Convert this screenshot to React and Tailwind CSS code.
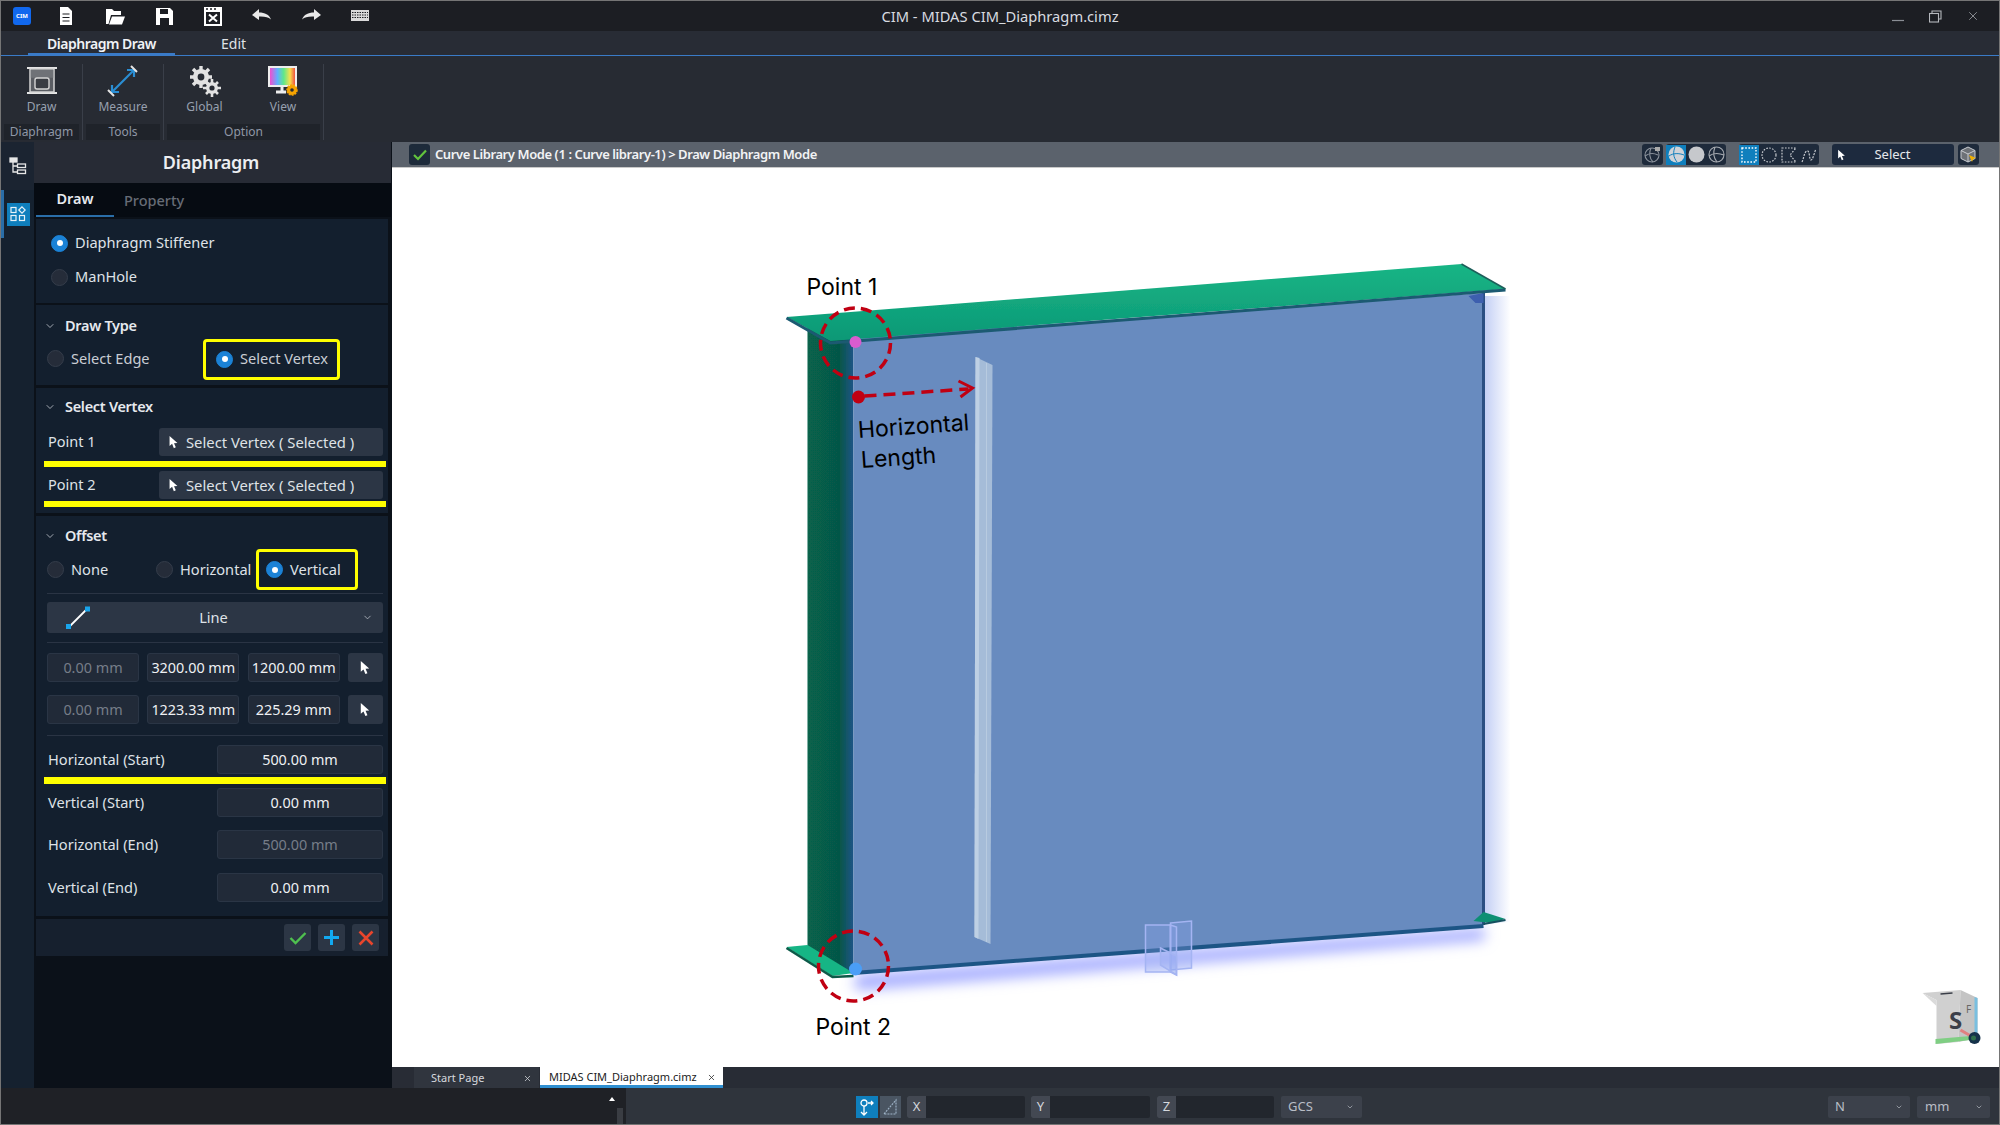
import React from "react";
import { ChevronDown, X } from "lucide-react";

const Radio = ({ on }) => (
  <span className={`flex h-[17px] w-[17px] shrink-0 items-center justify-center rounded-full border ${on ? "border-[#1b82d6] bg-[#1b82d6]" : "border-[#343c4a] bg-[#252c39]"}`}>
    {on && <span className="h-[6px] w-[6px] rounded-full bg-white" />}
  </span>
);

const Cursor = ({ size = 14 }) => (
  <svg width={size} height={size + 3} viewBox="0 0 12 16" className="shrink-0">
    <path d="M1.5 1 L1.5 12.5 L4.4 10 L6.4 15 L8.6 14 L6.6 9.3 L10.5 9 Z" fill="#fff" />
  </svg>
);

const Heading = ({ children }) => (
  <div className="flex h-[26px] items-center">
    <ChevronDown size={12} className="ml-[8px] mr-[9px] text-[#c5cad2]" strokeWidth={1.6} />
    <span className="text-[14.5px] font-semibold tracking-[-0.3px] text-[#e6e9ee]">{children}</span>
  </div>
);

const Field = ({ w, children, dim }) => (
  <div className={`flex h-[29px] items-center justify-center rounded-[3px] border border-[#2a3545] bg-[#212a38] text-[14.4px] ${dim ? "text-[#767d88]" : "text-[#eef0f3]"} ${w}`}>
    {children}
  </div>
);

const CursorBtn = () => (
  <div className="flex h-[29px] w-[35px] items-center justify-center rounded-[3px] bg-[#2c3645]">
    <Cursor size={12} />
  </div>
);

const LabelRow = ({ label, value, dim, cls }) => (
  <div className={`flex items-center justify-between ${cls}`}>
    <span className="pb-[2px] pl-[1px] text-[14.6px] leading-[20px] text-[#dfe2e7]">{label}</span>
    <Field w="w-[166px]" dim={dim}>{value}</Field>
  </div>
);

const SelectBtn = () => (
  <div className="flex h-[28px] w-[224px] items-center rounded-[3px] bg-[#2c3645] pl-[9px] text-[14.8px] text-[#dfe2e7]">
    <Cursor size={11} />
    <span className="ml-[7px]">Select Vertex ( Selected )</span>
  </div>
);

const YellowBox = ({ cls, children }) => (
  <div className={`flex h-[41px] items-center rounded-[4px] border-[3px] border-[#ffff00] ${cls}`}>{children}</div>
);

const Yellow = ({ cls }) => <div className={`-mx-[3px] bg-[#ffff00] ${cls}`} />;
const Divider = ({ cls }) => <div className={`h-px bg-[#2a3444] ${cls}`} />;

const TopIcon = ({ children }) => (
  <svg width="22" height="22" viewBox="0 0 22 22" className="shrink-0">{children}</svg>
);

const RibbonItem = ({ w, label, children }) => (
  <div className={`flex flex-col items-center ${w}`}>
    <div className="flex h-[34px] items-center justify-center">{children}</div>
    <span className="text-[12px] leading-[18px] text-[#97a0af]">{label}</span>
  </div>
);

const Group = ({ w, label, children }) => (
  <div className={`flex h-full flex-col border-r border-[#3a3f49] ${w}`}>
    <div className="flex h-[58px]">{children}</div>
    <div className="mx-[3px] mt-[2px] flex h-[16px] items-center justify-center bg-[#1f232a] text-[12px] text-[#8f97a6]">{label}</div>
  </div>
);

const Cell = ({ active, children }) => (
  <div className={`flex h-[20px] w-[20px] items-center justify-center ${active ? "bg-[#0f7fbd]" : ""}`}>{children}</div>
);

const Scene = () => (
  <svg viewBox="392 168 1606 899" className="h-full w-full" style={{ display: "block" }}>
    <defs>
      <linearGradient id="gface" x1="0" x2="1" y1="0" y2="0">
        <stop offset="0" stopColor="#07634c" />
        <stop offset="0.7" stopColor="#065647" />
        <stop offset="1" stopColor="#1f5488" />
      </linearGradient>
      <linearGradient id="flange" x1="0" x2="0" y1="0" y2="1">
        <stop offset="0" stopColor="#17b585" />
        <stop offset="1" stopColor="#0d9876" />
      </linearGradient>
      <linearGradient id="rglow" x1="0" x2="1" y1="0" y2="0">
        <stop offset="0" stopColor="#c3cff5" />
        <stop offset="1" stopColor="#ffffff" />
      </linearGradient>
      <filter id="blur" x="-20%" y="-100%" width="140%" height="300%">
        <feGaussianBlur stdDeviation="7" />
      </filter>
      <filter id="soft" x="-20%" y="-20%" width="140%" height="140%">
        <feGaussianBlur stdDeviation="0.6" />
      </filter>
    </defs>
    <rect x="392" y="168" width="1606" height="899" fill="#fff" />
    <polygon points="855,975 1484,928 1484,940 855,990" fill="#a0a8ff" filter="url(#blur)" />
    <polygon points="1484,296 1510,296 1510,922 1484,924" fill="url(#rglow)" />
    <g filter="url(#soft)">
      <polygon points="807,325 853,340 853,975 807,948" fill="url(#gface)" />
      <polygon points="853,338 1483,293 1483,925 853,972" fill="#688bbf" />
      <line x1="1483" y1="293" x2="1483" y2="925" stroke="#2a4f83" strokeWidth="3" />
      <line x1="853" y1="973" x2="1483" y2="926" stroke="#1f5585" strokeWidth="4" />
      <polygon points="1468,296 1483,293 1483,303 1475,303" fill="#3c5fae" />
      <polygon points="786,317 1461,264 1505,289 830,341" fill="url(#flange)" />
      <polyline points="786,318 830,343 1505,290" fill="none" stroke="#1c5a72" strokeWidth="3" />
      <line x1="1461" y1="264" x2="1505" y2="289" stroke="#1c5e5a" strokeWidth="1.5" />
      <polygon points="786,947 807,945 853,973 832,976" fill="#16b585" />
      <polyline points="786,948 832,977 853,976" fill="none" stroke="#0c5a48" strokeWidth="2.5" />
      <polygon points="1473,921 1483,912 1505,919 1490,923" fill="#0f8f73" />
      <line x1="1483" y1="924" x2="1505" y2="920" stroke="#17505f" strokeWidth="2" />
      <polygon points="975,357 992,365 990,944 974,937" fill="#a5bcd8" />
      <polygon points="975,357 979,358 978,939 974,937" fill="#bed0e4" />
      <line x1="986" y1="363" x2="986" y2="942" stroke="#b8cbe0" strokeWidth="1" />
    </g>
    <g fill="#8fa7ee" fillOpacity="0.3" stroke="#a4b4f2" strokeWidth="1.5">
      <polygon points="1145,925 1170,925 1170,972 1145,972" />
      <polygon points="1170,923 1191,921 1191,968 1170,970" />
      <polygon points="1170,925 1176,927 1176,975 1170,972" />
      <polygon points="1160,948 1176,956 1176,975 1160,965" />
    </g>
    <g fill="none" stroke="#c00012" strokeWidth="3.5" strokeDasharray="11 6">
      <circle cx="855" cy="343" r="35" />
      <circle cx="853" cy="966" r="35" />
    </g>
    <circle cx="855" cy="342" r="6" fill="#d95ccf" />
    <circle cx="855" cy="969" r="6.5" fill="#4a9ef7" />
    <circle cx="858" cy="397" r="6.5" fill="#c00012" />
    <line x1="864" y1="396" x2="968" y2="389" stroke="#c00012" strokeWidth="3.5" strokeDasharray="12 7" />
    <polyline points="958,381 972,388 960,397" fill="none" stroke="#c00012" strokeWidth="3" />
    <g fontFamily="Inter, sans-serif" fontSize="23" fill="#000">
      <text x="806" y="295">Point 1</text>
      <text x="815" y="1035">Point 2</text>
      <text x="858" y="438" transform="rotate(-4 858 438)">Horizontal</text>
      <text x="861" y="468" transform="rotate(-4 861 468)">Length</text>
    </g>
    <g>
      <polygon points="1922,993 1960,990 1958,1042 1936,1044 1936,1000" fill="#d0d0d0" />
      <polygon points="1922,993 1936,1000 1936,1006" fill="#dadada" />
      <polygon points="1960,990 1977,998 1977,1038 1958,1042" fill="#c4c4c4" />
      <polygon points="1974,997 1977,998 1977,1038 1974,1036" fill="#79bfe0" />
      <polygon points="1935,1039 1970,1036 1970,1040 1935,1044" fill="#7fce83" />
      <line x1="1960" y1="1030" x2="1972" y2="1037" stroke="#e08080" strokeWidth="3" />
      <line x1="1940" y1="994" x2="1952" y2="993" stroke="#3b3f49" strokeWidth="1.5" />
      <text x="1955" y="1029" textAnchor="middle" fontFamily="'Noto Sans', sans-serif" fontWeight="700" fontSize="24" fill="#3b3f49">S</text>
      <text x="1968" y="1013" textAnchor="middle" fontFamily="'Noto Sans', sans-serif" fontSize="10" fill="#666">F</text>
      <circle cx="1974" cy="1038" r="6" fill="#16324a" />
      <circle cx="1973" cy="1038" r="2.5" fill="#2f6e4a" />
    </g>
  </svg>
);

export default function App() {
  return (
    <div className="flex h-[1125px] w-[2000px] flex-col overflow-hidden border border-[#757575] bg-[#0b1119] font-['Noto_Sans',sans-serif]">
      {/* title bar */}
      <div className="relative flex h-[30px] shrink-0 items-center bg-[#1c1e23]">
        <div className="ml-[12px] flex h-[18px] w-[18px] items-center justify-center rounded-[3px] bg-[#1168ee] text-[6px] font-bold text-white">CIM</div>
        <div className="ml-[24px] flex items-center gap-[27px]">
          <TopIcon><path d="M5 2h8l4 4v14H5z" fill="#fff" /><path d="M7.5 9h7M7.5 12.5h7M7.5 16h7" stroke="#1c1e23" strokeWidth="1.2" /></TopIcon>
          <TopIcon><path d="M2 19V4h6l2 2h7v4H7L4.5 19z" fill="#fff" /><path d="M8 11.5h13L18 19.5H5z" fill="#fff" /></TopIcon>
          <TopIcon><path d="M3 3h14l3 3v14H3z" fill="#fff" /><rect x="7" y="4" width="8" height="5" fill="#1c1e23" /><rect x="7" y="13" width="9" height="7" fill="#1c1e23" /></TopIcon>
          <TopIcon><path d="M2 2h18v19H2z" fill="#fff" /><rect x="4" y="7" width="14" height="12" fill="#1c1e23" /><path d="M4 4h2M8 4h2M12 4h2" stroke="#1c1e23" strokeWidth="1.5" /><path d="M7 9.5l8 7M15 9.5l-8 7" stroke="#fff" strokeWidth="2" /></TopIcon>
          <TopIcon><path d="M1 10l7-6v3.5c6 0 10 2 12 7-3-2.5-6-3.2-12-3V15z" fill="#e9e9e9" /></TopIcon>
          <TopIcon><path d="M21 10l-7-6v3.5c-6 0-10 2-12 7 3-2.5 6-3.2 12-3V15z" fill="#e9e9e9" /></TopIcon>
          <TopIcon><rect x="2" y="5" width="18" height="11" fill="#d9d9d9" /><path d="M3 7.5h16M3 10h16M3 12.5h16" stroke="#1c1e23" strokeWidth="1" strokeDasharray="1.5 1" /></TopIcon>
        </div>
        <span className="absolute left-0 right-0 text-center text-[14.7px] text-[#d8dbe0]">CIM - MIDAS CIM_Diaphragm.cimz</span>
        <div className="ml-auto flex items-center gap-[24px] pr-[19px]">
          <svg width="13" height="13" viewBox="0 0 13 13"><path d="M0 10.5h12" stroke="#8a8e95" strokeWidth="1.2" /></svg>
          <svg width="13" height="13" viewBox="0 0 13 13" fill="none" stroke="#b5b8bd" strokeWidth="1.1"><rect x="0.5" y="3.5" width="9" height="8.5" /><path d="M3 3V1h9v8h-2.5" /></svg>
          <X size={14} strokeWidth={1.1} className="text-[#c3c6cb]" />
        </div>
      </div>
      {/* menu tabs */}
      <div className="flex h-[25px] shrink-0 border-b border-[#3a7bc8] bg-[#282c35]">
        <div className="ml-[27px] flex w-[147px] items-center justify-center border-b-[2px] border-[#3a7bc8] pt-[2px] text-[14px] font-semibold tracking-[-0.5px] text-[#f0f2f5]">Diaphragm Draw</div>
        <div className="ml-[46px] flex items-center pt-[1px] text-[14px] text-[#dfe2e7]">Edit</div>
      </div>
      {/* ribbon */}
      <div className="flex h-[86px] shrink-0 items-stretch bg-[#272b33] pb-[2px] pt-[8px]">
        <div className="flex h-full">
          <Group w="w-[82px]" label="Diaphragm">
            <RibbonItem w="w-[82px]" label="Draw">
              <svg width="32" height="30" viewBox="0 0 32 30"><path d="M1 2h30M1 27h30" stroke="#e4e4e4" strokeWidth="2" /><rect x="4" y="3" width="24" height="23" fill="#5a5d63" stroke="#d5d5d5" strokeWidth="1.5" /><rect x="4.8" y="3.8" width="22.4" height="8" fill="#6f7277" /><rect x="9" y="12" width="14" height="11" rx="2" fill="#3a3d43" stroke="#d5d5d5" strokeWidth="1.4" /></svg>
            </RibbonItem>
          </Group>
          <Group w="w-[81px]" label="Tools">
            <RibbonItem w="w-[81px]" label="Measure">
              <svg width="32" height="32" viewBox="0 0 32 32" fill="none"><path d="M6 26L26 6" stroke="#2a8ed4" strokeWidth="2.2" /><path d="M20 5h7v7M5 20v7h7" stroke="#2a8ed4" strokeWidth="2.2" /><path d="M24 1l6 6M1 25l6 6" stroke="#e4e4e4" strokeWidth="2" /></svg>
            </RibbonItem>
          </Group>
          <Group w="w-[160px]" label="Option">
            <div className="flex w-full">
              <RibbonItem w="w-[81px]" label="Global">
                <svg width="32" height="32" viewBox="0 0 32 32"><g fill="#e2e2e2"><circle cx="12" cy="12" r="8" /><g stroke="#e2e2e2" strokeWidth="3.4"><path d="M12 1v22M1 12h22M4 4l16 16M20 4L4 20" /></g><circle cx="23" cy="23" r="6" /><g stroke="#e2e2e2" strokeWidth="2.6"><path d="M23 14v18M14 23h18M17 17l12 12M29 17L17 29" /></g></g><circle cx="12" cy="12" r="3.4" fill="#272b33" /><circle cx="23" cy="23" r="2.6" fill="#272b33" /></svg>
              </RibbonItem>
              <RibbonItem w="w-[76px]" label="View">
                <svg width="32" height="32" viewBox="0 0 32 32"><defs><linearGradient id="rb" x1="0" x2="1" y1="0" y2="0"><stop offset="0" stopColor="#ef4fd0" /><stop offset="0.3" stopColor="#60b0ff" /><stop offset="0.55" stopColor="#5fe88a" /><stop offset="0.8" stopColor="#f5e04f" /><stop offset="1" stopColor="#f0503f" /></linearGradient></defs><rect x="1" y="1" width="29" height="21" fill="#eee" /><rect x="3" y="3" width="25" height="17" fill="url(#rb)" /><path d="M15 22v4M9 27h10" stroke="#eee" strokeWidth="3" /><circle cx="25" cy="25" r="5" fill="#f5a300" stroke="#f5a300" strokeWidth="1.5" strokeDasharray="2 1" /><circle cx="25" cy="25" r="1.8" fill="#272b33" /></svg>
              </RibbonItem>
            </div>
          </Group>
        </div>
      </div>
      {/* main */}
      <div className="flex min-h-0 flex-1">
        {/* rail */}
        <div className="flex w-[33px] shrink-0 flex-col bg-[#15212f]">
          <div className="flex h-[48px] items-center justify-center bg-[#1b2431]">
            <svg width="18" height="18" viewBox="0 0 18 18" fill="none" stroke="#e6e6e6" strokeWidth="1.3"><rect x="1" y="1" width="7" height="4" fill="#e6e6e6" /><rect x="8.5" y="7" width="8" height="3.5" /><rect x="8.5" y="13" width="8" height="3.5" /><path d="M4 5v10h4.5M4 9h4.5" /></svg>
          </div>
          <div className="flex h-[48px] items-center justify-center border-l-[3px] border-[#2a6ea8] pr-[2px]">
            <div className="flex h-[23px] w-[23px] items-center justify-center bg-[#0f7fbd]">
              <svg width="16" height="16" viewBox="0 0 16 16" fill="none" stroke="#e8f2f8" strokeWidth="1.2"><rect x="1" y="1.5" width="5" height="5" /><path d="M12 0.8l3.2 3.2L12 7.2 8.8 4z" /><rect x="1" y="9.5" width="5" height="5" /><rect x="9.5" y="9.5" width="5" height="5" /></svg>
            </div>
          </div>
        </div>
        {/* panel */}
        <div className="flex w-[357px] shrink-0 flex-col bg-[#0b1119]">
          <div className="flex h-[41px] items-center justify-center bg-[#272b35] pr-[3px] text-[18px] font-semibold tracking-[-0.2px] text-[#eceef1]">Diaphragm</div>
          <div className="flex h-[34px] bg-[#060b12] pl-[2px]">
            <div className="flex w-[78px] items-center justify-center border-b-[2px] border-[#2a6ea8] text-[14.5px] font-semibold text-[#e6e9ee]">Draw</div>
            <div className="ml-[10px] flex items-center pt-[1px] text-[14.5px] font-medium text-[#666c76]">Property</div>
          </div>
          <div className="flex flex-col pl-[2px] pr-[3px] text-[14.6px] text-[#dfe2e7]">
            {/* section 1 */}
            <div className="mt-[2px] h-[84px] bg-[#131f2e] pl-[15px] pt-[7px]">
              <div className="flex h-[34px] items-center gap-[7px]"><Radio on /><span>Diaphragm Stiffener</span></div>
              <div className="flex h-[34px] items-center gap-[7px]"><Radio /><span>ManHole</span></div>
            </div>
            {/* section 2 */}
            <div className="mt-[2px] h-[80px] bg-[#131f2e] pt-[8px]">
              <Heading>Draw Type</Heading>
              <div className="flex items-center pl-[11px]">
                <div className="flex w-[156px] items-center gap-[7px] pb-[1px]"><Radio /><span className="text-[#c9cdd4]">Select Edge</span></div>
                <YellowBox cls="w-[137px] gap-[7px] pb-[1px] pl-[10px]"><Radio on /><span className="text-[#c9cdd4]">Select Vertex</span></YellowBox>
              </div>
            </div>
            {/* section 3 */}
            <div className="mt-[3px] flex h-[125px] flex-col bg-[#131f2e] pl-[11px] pr-[5px] pt-[6px]">
              <div className="-ml-[11px]"><Heading>Select Vertex</Heading></div>
              <div className="mt-[8px] flex items-center justify-between"><span className="pl-[1px] text-[14.5px]">Point 1</span><SelectBtn /></div>
              <Yellow cls="mt-[5px] h-[6px]" />
              <div className="mt-[4px] flex items-center justify-between"><span className="pl-[1px] text-[14.5px]">Point 2</span><SelectBtn /></div>
              <Yellow cls="mt-[2px] h-[6px]" />
            </div>
            {/* section 4 */}
            <div className="mt-[3px] flex h-[400px] flex-col bg-[#131f2e] pl-[11px] pr-[5px] pt-[7px]">
              <div className="-ml-[11px]"><Heading>Offset</Heading></div>
              <div className="flex items-center">
                <div className="flex w-[109px] items-center gap-[7px]"><Radio /><span>None</span></div>
                <div className="flex w-[100px] items-center gap-[7px]"><Radio /><span>Horizontal</span></div>
                <YellowBox cls="w-[102px] gap-[7px] pl-[7px]"><Radio on /><span>Vertical</span></YellowBox>
              </div>
              <Divider cls="mt-[3px]" />
              <div className="relative mt-[8px] flex h-[31px] items-center justify-center rounded-[3px] bg-[#2c3645] pr-[3px] text-[14.6px] text-[#dfe2e7]">
                <svg width="28" height="26" viewBox="0 0 28 26" className="absolute left-[17px] top-[3px]"><path d="M5 22L23 4" stroke="#fff" strokeWidth="1.8" /><rect x="2" y="19" width="5" height="5" fill="#19a5ec" /><rect x="21" y="1.5" width="5" height="5" fill="#19a5ec" /></svg>
                Line
                <ChevronDown size={11} strokeWidth={1.6} className="absolute right-[10px] text-[#c5cad2]" />
              </div>
              <Divider cls="mt-[9px]" />
              <div className="mt-[10px] flex justify-between">
                <Field w="w-[92px]" dim>0.00 mm</Field><Field w="w-[92px]">3200.00 mm</Field><Field w="w-[92px]">1200.00 mm</Field><CursorBtn />
              </div>
              <div className="mt-[13px] flex justify-between">
                <Field w="w-[92px]" dim>0.00 mm</Field><Field w="w-[92px]">1223.33 mm</Field><Field w="w-[92px]">225.29 mm</Field><CursorBtn />
              </div>
              <Divider cls="mt-[11px]" />
              <LabelRow label="Horizontal (Start)" value="500.00 mm" cls="mt-[9px]" />
              <Yellow cls="mt-[3px] h-[7px]" />
              <LabelRow label="Vertical (Start)" value="0.00 mm" cls="mt-[4px]" />
              <LabelRow label="Horizontal (End)" value="500.00 mm" dim cls="mt-[13px]" />
              <LabelRow label="Vertical (End)" value="0.00 mm" cls="mt-[14px]" />
            </div>
            {/* footer */}
            <div className="mt-[3px] flex h-[37px] items-center justify-end gap-[7px] bg-[#16202e] pr-[9px]">
              <div className="flex h-[27px] w-[27px] items-center justify-center rounded-[3px] bg-[#2c3645]">
                <svg width="18" height="14" viewBox="0 0 18 14" fill="none"><path d="M1.5 7l5 5L16.5 2" stroke="#4fc04f" strokeWidth="2.4" /></svg>
              </div>
              <div className="flex h-[27px] w-[27px] items-center justify-center rounded-[3px] bg-[#2c3645]">
                <svg width="17" height="17" viewBox="0 0 17 17"><path d="M8.5 1v15M1 8.5h15" stroke="#12a9f0" strokeWidth="3" /></svg>
              </div>
              <div className="flex h-[27px] w-[27px] items-center justify-center rounded-[3px] bg-[#2c3645]">
                <svg width="16" height="16" viewBox="0 0 16 16"><path d="M1.5 1.5l13 13M14.5 1.5l-13 13" stroke="#e8452c" strokeWidth="2.6" /></svg>
              </div>
            </div>
          </div>
        </div>
        {/* viewport column */}
        <div className="ml-[1px] flex min-w-0 flex-1 flex-col">
          <div className="flex h-[26px] shrink-0 items-center border-b border-[#c9c9c9] bg-[#5b626c] pr-[20px]">
            <div className="ml-[17px] flex h-[21px] w-[21px] items-center justify-center rounded-[3px] bg-[#1d2a3a]">
              <svg width="14" height="12" viewBox="0 0 14 12" fill="none"><path d="M1 6l4 4L13 1.5" stroke="#62c43d" strokeWidth="2.2" /></svg>
            </div>
            <span className="ml-[5px] text-[13px] font-semibold tracking-[-0.42px] text-[#f2f3f5]">Curve Library Mode (1 : Curve library-1) &gt; Draw Diaphragm Mode</span>
            <div className="ml-auto flex items-center">
              <div className="flex h-[21px] w-[21px] items-center justify-center rounded-[3px] bg-[#1e2a3b]">
                <svg width="17" height="17" viewBox="0 0 17 17" fill="none" stroke="#8b929c" strokeWidth="1.1"><circle cx="8" cy="9" r="7" /><path d="M1 10c4-3 9-3 13-1M7 2c-2 4-2 10 2 14" /><rect x="11" y="1" width="5" height="4" fill="#aaa" stroke="none" /></svg>
              </div>
              <div className="ml-[3px] flex h-[21px] items-center rounded-[3px] bg-[#1e2a3b]">
                <Cell active><svg width="17" height="17" viewBox="0 0 17 17" fill="none"><circle cx="8.5" cy="8.5" r="8" fill="#cfd3d8" /><path d="M1 10c4-3 10-3 15-1M7 1c-2 5-2 10 2 15" stroke="#0f7fbd" strokeWidth="1" /></svg></Cell>
                <Cell><svg width="17" height="17" viewBox="0 0 17 17"><circle cx="8.5" cy="8.5" r="8" fill="#c6c8cc" /></svg></Cell>
                <Cell><svg width="17" height="17" viewBox="0 0 17 17" fill="none" stroke="#a8acb2" strokeWidth="1.1"><circle cx="8.5" cy="8.5" r="7.5" /><path d="M1 10c4-3 10-3 15-1M7 1c-2 5-2 10 2 15" /></svg></Cell>
              </div>
              <div className="ml-[13px] flex h-[21px] items-center rounded-[3px] bg-[#1e2a3b]">
                <Cell active><svg width="16" height="16" viewBox="0 0 16 16" fill="none" stroke="#fff" strokeWidth="1.4" strokeDasharray="1.6 1.6"><rect x="1" y="1" width="14" height="14" /></svg></Cell>
                <Cell><svg width="16" height="16" viewBox="0 0 16 16" fill="none" stroke="#c9ccd1" strokeWidth="1.2" strokeDasharray="1.6 1.4"><circle cx="8" cy="8" r="7" /></svg></Cell>
                <Cell><svg width="16" height="16" viewBox="0 0 16 16" fill="none" stroke="#c9ccd1" strokeWidth="1.2" strokeDasharray="1.6 1.4"><path d="M1 1h14l-6 7 6 7H1z" /></svg></Cell>
                <Cell><svg width="16" height="16" viewBox="0 0 16 16" fill="none" stroke="#c9ccd1" strokeWidth="1.2" strokeDasharray="2 1.2"><path d="M1 15c2-4 2-10 5-11s2 9 4 9 3-7 5-11" /></svg></Cell>
              </div>
              <div className="ml-[13px] flex h-[21px] w-[122px] items-center rounded-[3px] bg-[#1d2a3e] pl-[5px] text-[13px] text-[#e6e8ec]">
                <Cursor size={9} />
                <span className="flex-1 pr-[15px] text-center">Select</span>
              </div>
              <div className="ml-[4px] flex h-[21px] w-[21px] items-center justify-center rounded-[3px] bg-[#1e2a3b]">
                <svg width="17" height="18" viewBox="0 0 17 18"><path d="M8 1l7 3.5v8L8 16 1 12.5v-8z" fill="#6d7177" stroke="#c9ccd1" /><path d="M1 4.5L8 8l7-3.5M8 8v8" stroke="#c9ccd1" fill="none" /><path d="M9 9l7 3-3 1-1 3z" fill="#f0b000" /></svg>
              </div>
            </div>
          </div>
          <div className="min-h-0 flex-1 bg-white"><Scene /></div>
          <div className="flex h-[21px] shrink-0 bg-[#282c35] text-[11px]">
            <div className="ml-[22px] flex w-[125px] items-center justify-between bg-[#30353e] pl-[17px] pr-[7px] pt-[1px] text-[#d6d9de]">
              <span>Start Page</span><X size={9} />
            </div>
            <div className="ml-[1px] flex w-[183px] items-center justify-between border-b-[3px] border-[#2f8fd0] bg-white pl-[9px] pr-[7px] pt-[3px] text-[#222]">
              <span>MIDAS CIM_Diaphragm.cimz</span><X size={9} />
            </div>
          </div>
        </div>
      </div>
      {/* status bar */}
      <div className="flex h-[36px] shrink-0 bg-[#2f343c]">
        <div className="relative h-full w-[625px] shrink-0 bg-[#1f2126]">
          <span className="absolute left-[608px] top-[9px] h-0 w-0 border-x-[3px] border-b-[4px] border-x-transparent border-b-white" />
          <span className="absolute left-[616px] top-[20px] h-[16px] w-[6px] bg-[#3a3d43]" />
        </div>
        <div className="flex flex-1 items-center pt-[2px]">
          <div className="ml-[230px] flex h-[22px] w-[22px] items-center justify-center bg-[#0f7fbd]">
            <svg width="16" height="18" viewBox="0 0 16 18" fill="none" stroke="#fff" strokeWidth="1.3"><circle cx="5" cy="5" r="3" /><path d="M5 8v8M2 14l3 3 3-3M9 5h5M12 3l2 2-2 2" /></svg>
          </div>
          <div className="ml-[2px] flex h-[22px] w-[21px] items-center justify-center bg-[#4a5562]">
            <svg width="16" height="18" viewBox="0 0 16 18" fill="none" stroke="#9fb4c8" strokeWidth="1.1"><path d="M1 16L13 2v14z" strokeDasharray="2 1" /></svg>
          </div>
          <div className="ml-[6px] flex h-[22px] w-[118px] rounded-[2px] bg-[#22262d]">
            <span className="flex w-[19px] items-center justify-center rounded-l-[2px] bg-[#434852] text-[13px] text-[#d6d9de]">X</span>
          </div>
          <div className="ml-[6px] flex h-[22px] w-[119px] rounded-[2px] bg-[#22262d]">
            <span className="flex w-[19px] items-center justify-center rounded-l-[2px] bg-[#434852] text-[13px] text-[#d6d9de]">Y</span>
          </div>
          <div className="ml-[7px] flex h-[22px] w-[117px] rounded-[2px] bg-[#22262d]">
            <span className="flex w-[19px] items-center justify-center rounded-l-[2px] bg-[#434852] text-[13px] text-[#d6d9de]">Z</span>
          </div>
          <div className="ml-[7px] flex h-[22px] w-[81px] items-center justify-between rounded-[2px] bg-[#3c414b] pl-[7px] pr-[8px] text-[13px] text-[#b9bec6]">
            GCS <ChevronDown size={8} />
          </div>
          <div className="ml-[466px] flex h-[22px] w-[82px] items-center justify-between rounded-[2px] bg-[#3c414b] pl-[7px] pr-[7px] text-[13px] text-[#b9bec6]">
            N <ChevronDown size={8} />
          </div>
          <div className="ml-[7px] flex h-[22px] w-[73px] items-center justify-between rounded-[2px] bg-[#3c414b] pl-[8px] pr-[7px] text-[13px] text-[#b9bec6]">
            mm <ChevronDown size={8} />
          </div>
        </div>
      </div>
    </div>
  );
}
